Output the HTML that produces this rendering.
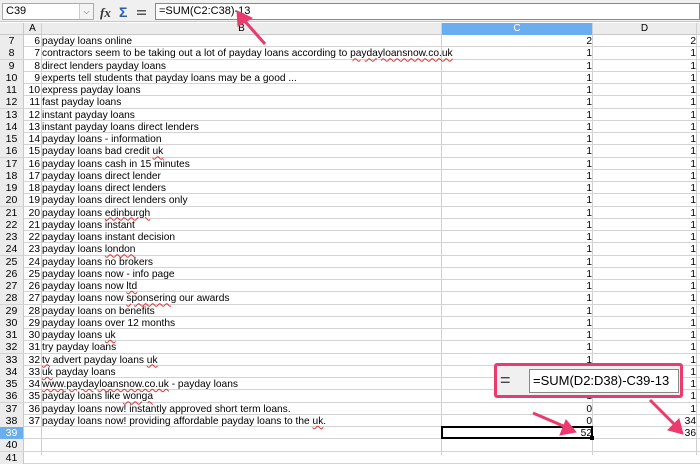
<!DOCTYPE html>
<html><head><style>
*{margin:0;padding:0;box-sizing:border-box}
body{width:700px;height:455px;overflow:hidden;background:#fff;font-family:"Liberation Sans",sans-serif;font-size:10.2px;color:#000;position:relative}
.tb{position:absolute;left:0;top:0;width:700px;height:22px;background:#f0f0f0;border-bottom:1px solid #c8c8c8}
.nb{position:absolute;left:2px;top:3px;width:92px;height:17px;border:1px solid #aaa;background:#fff;padding:1px 3px;font-size:11px}
.nbb{position:absolute;right:0;top:0;width:14px;height:15px;border-left:1px solid #ccc;background:#f4f4f4;font-size:8px;text-align:center;line-height:15px;color:#555}
.fx{position:absolute;left:155px;top:3px;width:545px;height:17px;border:1px solid #888;background:#fff;padding:1px 3px;font-size:11px}
.hdr{position:absolute;top:23px;left:0;width:700px;height:12px;background:#ececec;border-bottom:1px solid #c8c8c8}
.h{position:absolute;top:0;height:12px;text-align:center;line-height:12px;font-size:10px;border-right:1px solid #c8c8c8}
.r{position:absolute;left:0;width:700px;height:12.25px;line-height:13px;border-bottom:1px solid #d4d4d4}
.r span{position:absolute;top:0;white-space:nowrap}
.rn{left:0;width:24px;text-align:center;background:#ececec;height:12px;border-right:1px solid #c8c8c8;font-size:10.5px}
.a{left:24px;width:17px;text-align:right;padding-right:1px}
.b{left:42px}
.c{left:442px;width:151px;text-align:right;padding-right:1px}
.d{left:593px;width:104px;text-align:right;padding-right:1px}
.vl{position:absolute;top:23px;bottom:0;width:1px;background:#d0d0d0}
u{text-decoration:underline wavy #d33;text-decoration-thickness:1px}
</style></head><body>
<div class="tb">
<div class="nb">C39<div class="nbb">⌵</div></div>
<svg style="position:absolute;left:100px;top:4px" width="50" height="16"><text x="0" y="13" font-family="Liberation Serif" font-style="italic" font-size="13" font-weight="bold" fill="#333">fx</text><text x="19" y="13" font-size="14" font-weight="bold" fill="#2a5db0">Σ</text><rect x="37" y="6" width="9" height="1.5" fill="#555"/><rect x="37" y="9.5" width="9" height="1.5" fill="#555"/></svg>
<div class="fx">=SUM(C2:C38)-13</div>
</div>
<div class="hdr">
<div class="h" style="left:0;width:24px"></div>
<div class="h" style="left:24px;width:18px">A</div>
<div class="h" style="left:42px;width:400px">B</div>
<div class="h" style="left:442px;width:151px;background:#6aaef0;color:#fff">C</div>
<div class="h" style="left:593px;width:104px">D</div>
</div>
<div class="vl" style="left:41px"></div><div class="vl" style="left:441px"></div><div class="vl" style="left:592px"></div><div class="vl" style="left:696px"></div>
<div class="r" style="top:35px"><span class="rn">7</span><span class="a">6</span><span class="b">payday loans online</span><span class="c">2</span><span class="d">2</span></div>
<div class="r" style="top:47.25px"><span class="rn">8</span><span class="a">7</span><span class="b">contractors seem to be taking out a lot of payday loans according to <u>paydayloansnow.co.uk</u></span><span class="c">1</span><span class="d">1</span></div>
<div class="r" style="top:59.5px"><span class="rn">9</span><span class="a">8</span><span class="b">direct lenders payday loans</span><span class="c">1</span><span class="d">1</span></div>
<div class="r" style="top:71.75px"><span class="rn">10</span><span class="a">9</span><span class="b">experts tell students that payday loans may be a good ...</span><span class="c">1</span><span class="d">1</span></div>
<div class="r" style="top:84px"><span class="rn">11</span><span class="a">10</span><span class="b">express payday loans</span><span class="c">1</span><span class="d">1</span></div>
<div class="r" style="top:96.25px"><span class="rn">12</span><span class="a">11</span><span class="b">fast payday loans</span><span class="c">1</span><span class="d">1</span></div>
<div class="r" style="top:108.5px"><span class="rn">13</span><span class="a">12</span><span class="b">instant payday loans</span><span class="c">1</span><span class="d">1</span></div>
<div class="r" style="top:120.75px"><span class="rn">14</span><span class="a">13</span><span class="b">instant payday loans direct lenders</span><span class="c">1</span><span class="d">1</span></div>
<div class="r" style="top:133px"><span class="rn">15</span><span class="a">14</span><span class="b">payday loans - information</span><span class="c">1</span><span class="d">1</span></div>
<div class="r" style="top:145.25px"><span class="rn">16</span><span class="a">15</span><span class="b">payday loans bad credit <u>uk</u></span><span class="c">1</span><span class="d">1</span></div>
<div class="r" style="top:157.5px"><span class="rn">17</span><span class="a">16</span><span class="b">payday loans cash in 15 minutes</span><span class="c">1</span><span class="d">1</span></div>
<div class="r" style="top:169.75px"><span class="rn">18</span><span class="a">17</span><span class="b">payday loans direct lender</span><span class="c">1</span><span class="d">1</span></div>
<div class="r" style="top:182px"><span class="rn">19</span><span class="a">18</span><span class="b">payday loans direct lenders</span><span class="c">1</span><span class="d">1</span></div>
<div class="r" style="top:194.25px"><span class="rn">20</span><span class="a">19</span><span class="b">payday loans direct lenders only</span><span class="c">1</span><span class="d">1</span></div>
<div class="r" style="top:206.5px"><span class="rn">21</span><span class="a">20</span><span class="b">payday loans <u>edinburgh</u></span><span class="c">1</span><span class="d">1</span></div>
<div class="r" style="top:218.75px"><span class="rn">22</span><span class="a">21</span><span class="b">payday loans instant</span><span class="c">1</span><span class="d">1</span></div>
<div class="r" style="top:231px"><span class="rn">23</span><span class="a">22</span><span class="b">payday loans instant decision</span><span class="c">1</span><span class="d">1</span></div>
<div class="r" style="top:243.25px"><span class="rn">24</span><span class="a">23</span><span class="b">payday loans <u>london</u></span><span class="c">1</span><span class="d">1</span></div>
<div class="r" style="top:255.5px"><span class="rn">25</span><span class="a">24</span><span class="b">payday loans no brokers</span><span class="c">1</span><span class="d">1</span></div>
<div class="r" style="top:267.75px"><span class="rn">26</span><span class="a">25</span><span class="b">payday loans now - info page</span><span class="c">1</span><span class="d">1</span></div>
<div class="r" style="top:280px"><span class="rn">27</span><span class="a">26</span><span class="b">payday loans now <u>ltd</u></span><span class="c">1</span><span class="d">1</span></div>
<div class="r" style="top:292.25px"><span class="rn">28</span><span class="a">27</span><span class="b">payday loans now <u>sponsering</u> our awards</span><span class="c">1</span><span class="d">1</span></div>
<div class="r" style="top:304.5px"><span class="rn">29</span><span class="a">28</span><span class="b">payday loans on benefits</span><span class="c">1</span><span class="d">1</span></div>
<div class="r" style="top:316.75px"><span class="rn">30</span><span class="a">29</span><span class="b">payday loans over 12 months</span><span class="c">1</span><span class="d">1</span></div>
<div class="r" style="top:329px"><span class="rn">31</span><span class="a">30</span><span class="b">payday loans <u>uk</u></span><span class="c">1</span><span class="d">1</span></div>
<div class="r" style="top:341.25px"><span class="rn">32</span><span class="a">31</span><span class="b">try payday loans</span><span class="c">1</span><span class="d">1</span></div>
<div class="r" style="top:353.5px"><span class="rn">33</span><span class="a">32</span><span class="b"><u>tv</u> advert payday loans <u>uk</u></span><span class="c">1</span><span class="d">1</span></div>
<div class="r" style="top:365.75px"><span class="rn">34</span><span class="a">33</span><span class="b"><u>uk</u> payday loans</span><span class="c">1</span><span class="d">1</span></div>
<div class="r" style="top:378px"><span class="rn">35</span><span class="a">34</span><span class="b"><u>www.paydayloansnow.co.uk</u> - payday loans</span><span class="c">1</span><span class="d">1</span></div>
<div class="r" style="top:390.25px"><span class="rn">36</span><span class="a">35</span><span class="b">payday loans like <u>wonga</u></span><span class="c">1</span><span class="d">1</span></div>
<div class="r" style="top:402.5px"><span class="rn">37</span><span class="a">36</span><span class="b">payday loans now! instantly approved short term loans.</span><span class="c">0</span><span class="d">1</span></div>
<div class="r" style="top:414.75px"><span class="rn">38</span><span class="a">37</span><span class="b">payday loans now! providing affordable payday loans to the <u>uk</u>.</span><span class="c">0</span><span class="d">34</span></div>
<div class="r" style="top:427px"><span class="rn" style="background:#6aaef0;color:#fff">39</span><span class="c">52</span><span class="d">36</span></div>
<div class="r" style="top:439.25px"><span class="rn">40</span></div>
<div class="r" style="top:451.5px"><span class="rn">41</span></div>
<div style="position:absolute;left:441px;top:426px;width:152px;height:13px;border:2px solid #000"></div>
<div style="position:absolute;left:590px;top:436px;width:4px;height:4px;background:#000"></div>
<div style="position:absolute;left:494px;top:363px;width:189px;height:35px;background:#f0f0f0;border:3px solid #ea3a6e;border-radius:3px"></div>
<div style="position:absolute;left:500px;top:370px;font-size:18px;color:#444">=</div>
<div style="position:absolute;left:529px;top:369px;width:150px;height:24px;background:#fff;border:1px solid #888;font-size:13px;padding:3px 3px">=SUM(D2:D38)-C39-13</div>
<svg style="position:absolute;left:0;top:0" width="700" height="455">
<g stroke="#ea3a6e" fill="#ea3a6e">
<line x1="265" y1="44" x2="242" y2="18" stroke-width="3"/><polygon points="237,11 252,18 238,26"/>
<line x1="533" y1="413" x2="568" y2="428" stroke-width="3"/><polygon points="576,432 560,435 566,420"/>
<line x1="650" y1="400" x2="677" y2="427" stroke-width="3"/><polygon points="683,434 668,430 679,419"/>
</g></svg>
</body></html>
